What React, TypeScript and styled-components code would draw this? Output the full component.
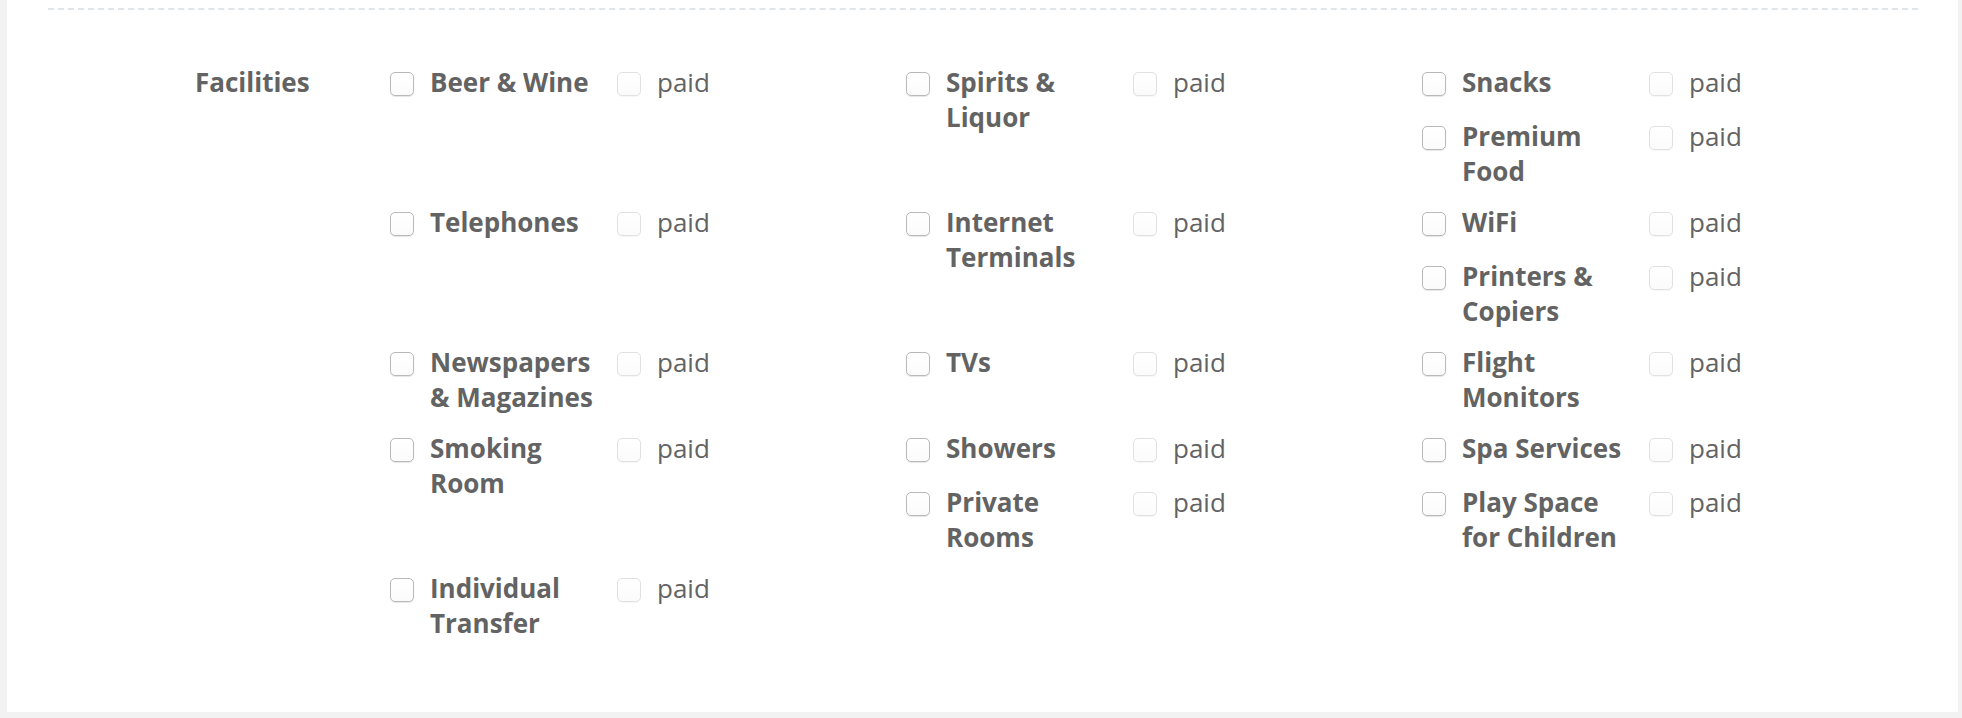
import React from "react";
import styled, { createGlobalStyle } from "styled-components";

const GlobalStyle = createGlobalStyle`
  html, body {
    margin: 0;
    padding: 0;
    background: #f2f2f2;
  }
  body {
    font-family: "Open Sans", "Liberation Sans", Arial, sans-serif;
    color: #636363;
  }
`;

const Page = styled.div`
  padding: 0 4px 6px 7px;
`;

const Panel = styled.section`
  background: #fff;
  padding: 8px 40px 55px 41px;
`;

const Separator = styled.hr`
  margin: 0;
  border: 0;
  border-top: 2px dashed #e1e5e8;
  height: 0;
`;

const FormRow = styled.div`
  display: flex;
  align-items: flex-start;
  margin-top: 55px;
`;

const RowLabel = styled.div`
  flex: 0 0 322px;
  box-sizing: border-box;
  padding-left: 147px;
  font-size: 26px;
  line-height: 35px;
  font-weight: 700;
  color: #636363;
`;

const Options = styled.div`
  display: flow-root;
  width: 1548px;
`;

const Option = styled.div`
  float: left;
  width: 516px;
  box-sizing: border-box;
  padding-left: 20px;
  margin-bottom: 16px;
  min-height: 38px;
  display: flex;
  align-items: flex-start;
`;

const Box = styled.input<{ $muted?: boolean }>`
  appearance: none;
  -webkit-appearance: none;
  flex: 0 0 auto;
  width: 24px;
  height: 24px;
  margin: 7px 0 0 0;
  box-sizing: border-box;
  border-radius: 5px;
  background: linear-gradient(#ffffff, #fbfbfb);
  border: 1.5px solid ${(p) => (p.$muted ? "#e1e1e1" : "#b9b9b9")};
  box-shadow: ${(p) =>
    p.$muted ? "0 1px 1px rgba(0,0,0,0.04)" : "0 1px 1px rgba(0,0,0,0.1)"};
`;

const OptionName = styled.span`
  flex: 0 0 175px;
  margin: 0 12px 0 16px;
  font-size: 26px;
  line-height: 35px;
  font-weight: 700;
  color: #636363;
`;

const Paid = styled.label`
  display: flex;
  align-items: flex-start;
  gap: 16px;
  font-size: 26px;
  line-height: 35px;
  font-weight: 400;
  color: #636363;
`;

const facilities = [
  "Beer & Wine",
  "Spirits & Liquor",
  "Snacks",
  "Premium Food",
  "Telephones",
  "Internet Terminals",
  "WiFi",
  "Printers & Copiers",
  "Newspapers & Magazines",
  "TVs",
  "Flight Monitors",
  "Smoking Room",
  "Showers",
  "Spa Services",
  "Private Rooms",
  "Play Space for Children",
  "Individual Transfer",
];

export default function App() {
  return (
    <>
      <GlobalStyle />
      <Page>
        <Panel>
          <Separator />
          <FormRow>
            <RowLabel>Facilities</RowLabel>
            <Options>
              {facilities.map((name) => (
                <Option key={name}>
                  <Box type="checkbox" aria-label={name} />
                  <OptionName>{name}</OptionName>
                  <Paid>
                    <Box type="checkbox" $muted />
                    paid
                  </Paid>
                </Option>
              ))}
            </Options>
          </FormRow>
        </Panel>
      </Page>
    </>
  );
}
